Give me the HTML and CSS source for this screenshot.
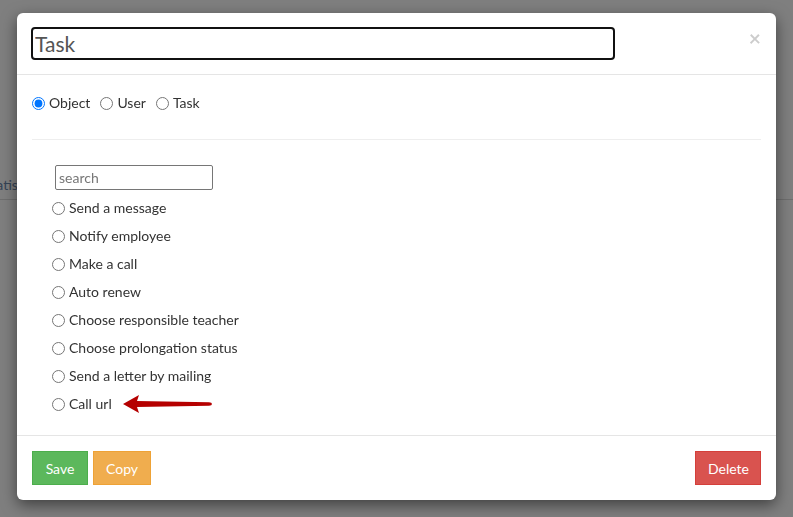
FILE: index.html
```html
<!DOCTYPE html>
<html lang="en">
<head>
    <meta charset="UTF-8">
    <title>Task</title>
    <link rel="stylesheet" href="styles.css">
</head>
<body>
    <div class="page">
        <div class="page-nav"><span class="nav-link">Statistics</span></div>
    </div>
    <div class="backdrop"></div>

    <div class="modal">
        <div class="modal-header">
            <input class="title-input" type="text" value="Task">
            <span class="close">&times;</span>
        </div>
        <div class="modal-body">
            <div class="type-row">
                <label class="radio-inline"><input type="radio" name="type" checked> Object</label>
                <label class="radio-inline"><input type="radio" name="type"> User</label>
                <label class="radio-inline"><input type="radio" name="type"> Task</label>
            </div>
            <hr>
            <div class="action-list">
                <input class="search" type="text" placeholder="search">
                <label class="action"><input type="radio" name="action"> Send a message</label>
                <label class="action"><input type="radio" name="action"> Notify employee</label>
                <label class="action"><input type="radio" name="action"> Make a call</label>
                <label class="action"><input type="radio" name="action"> Auto renew</label>
                <label class="action"><input type="radio" name="action"> Choose responsible teacher</label>
                <label class="action"><input type="radio" name="action"> Choose prolongation status</label>
                <label class="action"><input type="radio" name="action"> Send a letter by mailing</label>
                <label class="action"><input type="radio" name="action"> Call url
                    <svg class="arrow" width="90" height="20" viewBox="0 0 90 20">
                        <path d="M0 10 L16 1 L14 7 L86 8.2 Q89 8.5 89 10 Q89 11.5 86 11.8 L14 13 L16 19 Z" fill="#b50000"/>
                    </svg>
                </label>
            </div>
        </div>
        <div class="modal-footer">
            <div class="left-buttons">
                <button class="btn btn-success">Save</button>
                <button class="btn btn-warning">Copy</button>
            </div>
            <button class="btn btn-danger">Delete</button>
        </div>
    </div>
</body>
</html>
```

FILE: styles.css
```css
body {
    margin: 0;
    font-family: Lato, "Open Sans", sans-serif;
    font-size: 14px;
    color: #333;
    background: #fff;
    height: 517px;
    overflow: hidden;
}

.page-nav {
    margin-top: 171px;
    height: 28px;
    border-bottom: 1px solid #ddd;
    margin-left: -16px;
}

.nav-link {
    font-size: 14px;
    color: #6a86ab;
    line-height: 28px;
}

.backdrop {
    position: fixed;
    inset: 0;
    background: rgba(0, 0, 0, 0.5);
}

.modal {
    position: absolute;
    top: 13px;
    left: 17px;
    width: 759px;
    height: 487px;
    background: #fff;
    border-radius: 6px;
    box-shadow: 0 5px 15px rgba(0, 0, 0, 0.5);
    display: flex;
    flex-direction: column;
}

.modal-header {
    display: flex;
    justify-content: space-between;
    align-items: flex-start;
    padding: 14px 14px 14px 14px;
    border-bottom: 1px solid #e5e5e5;
}

.title-input {
    width: 584px;
    height: 33px;
    box-sizing: border-box;
    border: 2px solid #111;
    border-radius: 4px;
    padding: 0 2px;
    font-family: Lato, sans-serif;
    font-size: 21px;
    color: #555;
    outline: none;
}

.close {
    font-size: 21px;
    font-weight: bold;
    line-height: 18px;
    color: #000;
    opacity: 0.2;
    margin-top: 2px;
    margin-right: 1px;
}

.modal-body {
    padding: 18px 15px 0 15px;
    flex: 1;
}

.type-row {
    display: flex;
    gap: 10px;
    line-height: 20px;
}

.radio-inline,
.action {
    display: flex;
    align-items: center;
    gap: 4px;
}

input[type="radio"] {
    margin: 0;
    width: 13px;
    height: 13px;
}

hr {
    border: 0;
    border-top: 1px solid #eee;
    margin: 26px 0 25px 0;
}

.action-list {
    display: flex;
    flex-direction: column;
    gap: 8px;
    padding-left: 20px;
    line-height: 20px;
}

.search {
    width: 158px;
    height: 25px;
    box-sizing: border-box;
    margin-left: 3px;
    border: 1px solid #767676;
    border-radius: 2px;
    padding: 0 3px;
    font-family: Lato, sans-serif;
    font-size: 14px;
    color: #333;
}

.search::placeholder {
    color: #777;
}

.arrow {
    margin-left: 7px;
    margin-top: -1px;
}

.modal-footer {
    display: flex;
    justify-content: space-between;
    padding: 15px 15px 15px 15px;
    border-top: 1px solid #e5e5e5;
}

.left-buttons {
    display: flex;
    gap: 5px;
}

.btn {
    height: 34px;
    padding: 0 12px;
    font-family: Lato, sans-serif;
    font-size: 14px;
    color: #fff;
    border: 1px solid transparent;
    border-radius: 0;
}

.btn-success {
    background: #5cb85c;
    border-color: #4cae4c;
    width: 56px;
}

.btn-warning {
    background: #f0ad4e;
    border-color: #eea236;
    width: 58px;
}

.btn-danger {
    background: #d9534f;
    border-color: #d43f3a;
    width: 66px;
}
```
